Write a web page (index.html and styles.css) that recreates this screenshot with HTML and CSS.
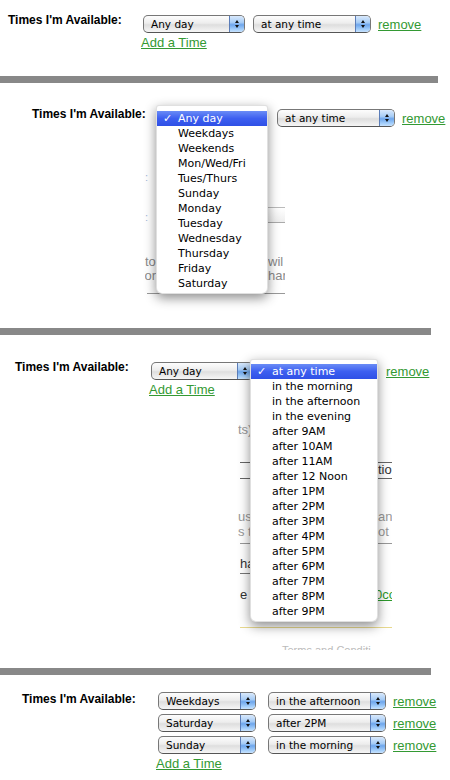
FILE: index.html
```html
<!DOCTYPE html>
<html lang="en">
<head>
    <meta charset="UTF-8">
    <meta name="viewport" content="width=device-width, initial-scale=1.0">
    <title>Times I'm Available</title>
    <link rel="stylesheet" href="styles.css">
</head>
<body>
    <!-- 1: closed -->
    <section class="panel panel-one">
        <div class="field">
            <div class="field-label">Times I'm Available:</div>
            <div class="times">
                <div class="time-row">
                    <div class="select day"><span class="select-value">Any day</span><span class="select-arrow"></span></div>
                    <div class="select hour"><span class="select-value">at any time</span><span class="select-arrow"></span></div>
                    <a href="#" class="remove">remove</a>
                </div>
                <a href="#" class="add-time">Add a Time</a>
            </div>
        </div>
    </section>
    <div class="divider"></div>

    <!-- 2: day menu open -->
    <section class="panel panel-two">
        <div class="backdrop">
            <span class="frag dots" style="left:0;top:10px">:</span>
            <span class="frag dots" style="left:0;top:50px">:</span>
            <div class="ghost-select"></div>
            <span class="frag" style="left:0;top:95px">to</span>
            <span class="frag" style="left:123px;top:95px">wil</span>
            <span class="frag" style="left:-4px;top:109px">for</span>
            <span class="frag" style="left:123px;top:109px">har</span>
            <div class="rule" style="top:133px"></div>
        </div>
        <div class="field">
            <div class="field-label">Times I'm Available:</div>
            <div class="times">
                <div class="time-row">
                    <div class="select day covered"><span class="select-value">Any day</span><span class="select-arrow"></span></div>
                    <div class="select hour"><span class="select-value">at any time</span><span class="select-arrow"></span></div>
                    <a href="#" class="remove">remove</a>
                </div>
                <a href="#" class="add-time covered">Add a Time</a>
            </div>
        </div>
        <ul class="menu menu-days">
            <li class="menu-item selected">Any day</li>
            <li class="menu-item">Weekdays</li>
            <li class="menu-item">Weekends</li>
            <li class="menu-item">Mon/Wed/Fri</li>
            <li class="menu-item">Tues/Thurs</li>
            <li class="menu-item">Sunday</li>
            <li class="menu-item">Monday</li>
            <li class="menu-item">Tuesday</li>
            <li class="menu-item">Wednesday</li>
            <li class="menu-item">Thursday</li>
            <li class="menu-item">Friday</li>
            <li class="menu-item">Saturday</li>
        </ul>
    </section>
    <div class="divider short"></div>

    <!-- 3: time menu open -->
    <section class="panel panel-three">
        <div class="backdrop">
            <span class="frag light" style="left:0;top:8px">ts)</span>
            <div class="rule dark" style="top:47px"></div>
            <span class="frag dark" style="left:140px;top:48px">tion</span>
            <div class="rule dark" style="top:63px"></div>
            <span class="frag light" style="left:0;top:95px">us</span>
            <span class="frag light" style="left:140px;top:95px">and</span>
            <span class="frag light" style="left:0;top:110px">s t</span>
            <span class="frag light" style="left:140px;top:110px">ot r</span>
            <div class="rule" style="top:128px"></div>
            <span class="frag dark boxed" style="left:2px;top:142px">ha</span>
            <span class="frag dark" style="left:2px;top:173px">e</span>
            <span class="frag green" style="left:137px;top:173px">0co</span>
            <div class="rule yellow" style="top:212px"></div>
            <span class="frag faint" style="left:44px;top:228px">Terms and Conditi</span>
        </div>
        <div class="field">
            <div class="field-label">Times I'm Available:</div>
            <div class="times">
                <div class="time-row">
                    <div class="select day"><span class="select-value">Any day</span><span class="select-arrow"></span></div>
                    <div class="select hour covered"><span class="select-value">at any time</span><span class="select-arrow"></span></div>
                    <a href="#" class="remove">remove</a>
                </div>
                <a href="#" class="add-time">Add a Time</a>
            </div>
        </div>
        <ul class="menu menu-hours">
            <li class="menu-item selected">at any time</li>
            <li class="menu-item">in the morning</li>
            <li class="menu-item">in the afternoon</li>
            <li class="menu-item">in the evening</li>
            <li class="menu-item">after 9AM</li>
            <li class="menu-item">after 10AM</li>
            <li class="menu-item">after 11AM</li>
            <li class="menu-item">after 12 Noon</li>
            <li class="menu-item">after 1PM</li>
            <li class="menu-item">after 2PM</li>
            <li class="menu-item">after 3PM</li>
            <li class="menu-item">after 4PM</li>
            <li class="menu-item">after 5PM</li>
            <li class="menu-item">after 6PM</li>
            <li class="menu-item">after 7PM</li>
            <li class="menu-item">after 8PM</li>
            <li class="menu-item">after 9PM</li>
        </ul>
    </section>
    <div class="divider short"></div>

    <!-- 4: several times -->
    <section class="panel panel-four">
        <div class="field">
            <div class="field-label">Times I'm Available:</div>
            <div class="times">
                <div class="time-row">
                    <div class="select day"><span class="select-value">Weekdays</span><span class="select-arrow"></span></div>
                    <div class="select hour"><span class="select-value">in the afternoon</span><span class="select-arrow"></span></div>
                    <a href="#" class="remove">remove</a>
                </div>
                <div class="time-row">
                    <div class="select day"><span class="select-value">Saturday</span><span class="select-arrow"></span></div>
                    <div class="select hour"><span class="select-value">after 2PM</span><span class="select-arrow"></span></div>
                    <a href="#" class="remove">remove</a>
                </div>
                <div class="time-row">
                    <div class="select day"><span class="select-value">Sunday</span><span class="select-arrow"></span></div>
                    <div class="select hour"><span class="select-value">in the morning</span><span class="select-arrow"></span></div>
                    <a href="#" class="remove">remove</a>
                </div>
                <a href="#" class="add-time">Add a Time</a>
            </div>
        </div>
    </section>
</body>
</html>
```

FILE: styles.css
```css
body {
    margin: 0;
    padding: 0;
    width: 450px;
    background: #fff;
    color: #000;
    font-family: "Liberation Sans", Arial, sans-serif;
    overflow: hidden;
}

.panel {
    position: relative;
    box-sizing: border-box;
    overflow: hidden;
}

.panel-one {
    height: 76px;
    padding: 15px 0 0 8px;
}

.panel-two {
    height: 245px;
    padding: 26px 0 0 32px;
}

.panel-three {
    height: 333px;
    padding: 27px 0 0 15px;
}

.panel-four {
    height: 105px;
    padding: 17px 0 0 22px;
}

.divider {
    width: 438px;
    height: 7px;
    background: #888;
}

.divider.short {
    width: 431px;
}

/* form row */
.field {
    position: relative;
    display: flex;
    align-items: flex-start;
}

.field-label {
    flex: none;
    width: 135px;
    margin-top: -2px;
    font-size: 12px;
    line-height: 14px;
    font-weight: bold;
}

.panel-three .field-label,
.panel-four .field-label {
    width: 136px;
}

.panel-four .field-label {
    margin-top: 0;
}

.times {
    display: flex;
    flex-direction: column;
    gap: 4px;
}

.time-row {
    display: flex;
    align-items: center;
    gap: 8px;
}

.panel-four .time-row {
    gap: 12px;
}

a {
    color: #339933;
    text-decoration: underline;
    font-size: 13px;
    line-height: 15px;
}

.remove {
    margin-left: -1px;
}

.panel-four .remove {
    margin-left: -5px;
}

.add-time {
    align-self: flex-start;
    margin: -2px 0 0 -2px;
}

/* things hidden under an open menu keep their place */
.covered {
    visibility: hidden;
}

/* aqua style select */
.select {
    display: flex;
    box-sizing: border-box;
    width: 102px;
    height: 18px;
    border: 1px solid #777;
    border-bottom-color: #555;
    border-radius: 5px;
    background: linear-gradient(#fdfdfd, #ededed 45%, #dedede 55%, #f6f6f6);
    font-family: "DejaVu Sans", sans-serif;
    font-size: 10.5px;
    color: #000;
}

.select.hour {
    width: 118px;
}

.panel-four .select.day {
    width: 98px;
}

.select-value {
    flex: 1;
    padding-left: 7px;
    line-height: 16px;
    white-space: nowrap;
    overflow: hidden;
}

.select-arrow {
    flex: none;
    width: 14px;
    border-left: 1px solid #5b7db8;
    border-radius: 0 4px 4px 0;
    background: linear-gradient(#d9e9fc, #a8cdf6 40%, #6ea6ec 55%, #a6d0fb 85%, #c8e2fd);
    display: flex;
    flex-direction: column;
    align-items: center;
    justify-content: center;
    gap: 2px;
}

.select-arrow::before,
.select-arrow::after {
    content: "";
    border-left: 2.5px solid transparent;
    border-right: 2.5px solid transparent;
}

.select-arrow::before {
    border-bottom: 3px solid #111;
}

.select-arrow::after {
    border-top: 3px solid #111;
}

/* open popup menus */
.menu {
    position: absolute;
    z-index: 3;
    margin: 0;
    padding: 5px 0 4px;
    list-style: none;
    background: #fff;
    border: 1px solid rgba(0, 0, 0, 0.12);
    border-radius: 3px 3px 6px 6px;
    box-shadow: 0 4px 12px rgba(0, 0, 0, 0.45);
    font-family: "DejaVu Sans", sans-serif;
    font-size: 11px;
    box-sizing: border-box;
}

.menu-days {
    left: 156px;
    top: 22px;
    width: 112px;
    height: 189px;
}

.menu-hours {
    left: 250px;
    top: 24px;
    width: 128px;
    height: 263px;
    padding-top: 4px;
}

.menu-item {
    position: relative;
    height: 15px;
    line-height: 15px;
    padding-left: 21px;
    white-space: nowrap;
}

.menu-item.selected {
    color: #fff;
    background: linear-gradient(#6a8cf6, #3d5ff0 50%, #2f50e6);
}

.menu-item.selected::before {
    content: "\2713";
    position: absolute;
    left: 6px;
    top: 0;
    font-weight: bold;
}

/* page content showing around the open menu */
.backdrop {
    position: absolute;
    z-index: 2;
    overflow: hidden;
    background: #fff;
}

.panel-two .backdrop {
    left: 145px;
    top: 77px;
    width: 140px;
    height: 137px;
}

.panel-three .backdrop {
    left: 238px;
    top: 80px;
    width: 154px;
    height: 235px;
}

.frag {
    position: absolute;
    font-size: 13px;
    line-height: 14px;
    color: #8a8a8a;
    white-space: nowrap;
}

.frag.dots {
    color: #9fb6d8;
    font-size: 11px;
}

.frag.light {
    color: #999;
}

.frag.dark {
    color: #333;
}

.frag.boxed {
    width: 18px;
    padding-bottom: 2px;
    border-bottom: 1px solid #777;
}

.frag.green {
    color: #2c9a2c;
    text-decoration: underline;
}

.frag.faint {
    color: #bbb;
    font-size: 11px;
}

.ghost-select {
    position: absolute;
    left: 20px;
    top: 47px;
    width: 130px;
    height: 14px;
    border-top: 1px solid #bbb;
    border-bottom: 1px solid #aaa;
    background: linear-gradient(#fff, #eee);
}

.rule {
    position: absolute;
    left: 2px;
    right: 0;
    height: 1px;
    background: #999;
}

.rule.dark {
    background: #666;
}

.rule.yellow {
    background: #e8d98e;
}
```
